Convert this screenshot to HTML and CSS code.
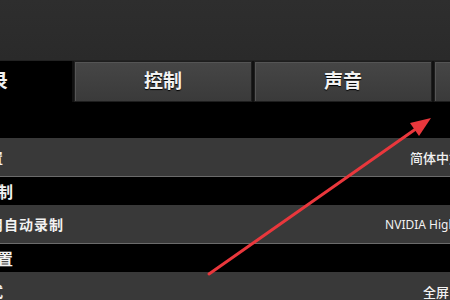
FILE: index.html
```html
<!DOCTYPE html>
<html lang="zh-CN">
<head>
<meta charset="utf-8">
<link rel="stylesheet" href="styles.css">
</head>
<body>
<div class="screen">
  <div class="topbar"></div>
  <div class="tabs">
    <div class="tab tab-active">记录</div>
    <div class="tab">控制</div>
    <div class="tab">声音</div>
    <div class="tab">视频</div>
  </div>
  <div class="spacer"></div>
  <div class="row"><span class="label">设置</span><span class="value">简体中文</span></div>
  <div class="section">录制</div>
  <div class="row"><span class="label">启用自动录制</span><span class="value value-latin">NVIDIA Highlights</span></div>
  <div class="section">设置</div>
  <div class="row"><span class="label">模式</span><span class="value">全屏</span></div>
</div>
<svg class="arrow" width="450" height="300" viewBox="0 0 450 300">
  <line x1="209" y1="274" x2="420" y2="126" stroke="#e9373c" stroke-width="3" stroke-linecap="round"/>
  <polygon points="431,118 410,123 419,136" fill="#e9373c"/>
</svg>
</body>
</html>
```
FILE: styles.css
```css
html, body {
  margin: 0;
  padding: 0;
  overflow: hidden;
  background: #000;
}
body {
  position: relative;
  width: 450px;
  height: 300px;
  font-family: "Noto Sans CJK SC", "Noto Sans", sans-serif;
  color: #f2f2f2;
}
.screen {
  width: 616px;
  margin-left: -110px;
}
.topbar {
  height: 60px;
  background: linear-gradient(#2e2e2e, #2a2a2a);
  border-bottom: 1px solid #222;
}
.tabs {
  display: flex;
  gap: 2px;
  height: 41px;
  background: #111;
}
.tab {
  flex: none;
  width: 178px;
  box-sizing: border-box;
  display: flex;
  align-items: center;
  justify-content: center;
  padding-bottom: 4px;
  font-size: 19px;
  font-weight: 700;
  background: linear-gradient(#464646, #3a3a3a);
  border: 1px solid #1e1e1e;
  box-shadow: inset 1px 1px 0 #555;
  text-shadow: 0 1px 1px #000;
}
.tab-active {
  width: 182px;
  padding-left: 16px;
  background: #000;
  border-color: #000;
  box-shadow: none;
}
.spacer {
  height: 36px;
  background: #000;
}
.row {
  height: 38px;
  display: flex;
  align-items: center;
  background: #393939;
  border-bottom: 1px solid #6b6b6b;
}
.label {
  flex: 1;
  padding-left: 84px;
  font-size: 14px;
  font-weight: 700;
  letter-spacing: 1px;
}
.value {
  width: 140px;
  text-align: center;
  font-size: 13px;
  font-weight: 500;
}
.value-latin {
  font-family: "Noto Sans", sans-serif;
  font-size: 12px;
  font-weight: 400;
}
.section {
  height: 28px;
  display: flex;
  align-items: center;
  padding-left: 91px;
  font-size: 16px;
  font-weight: 700;
  background: #000;
}
.arrow {
  position: absolute;
  left: 0;
  top: 0;
}
```
